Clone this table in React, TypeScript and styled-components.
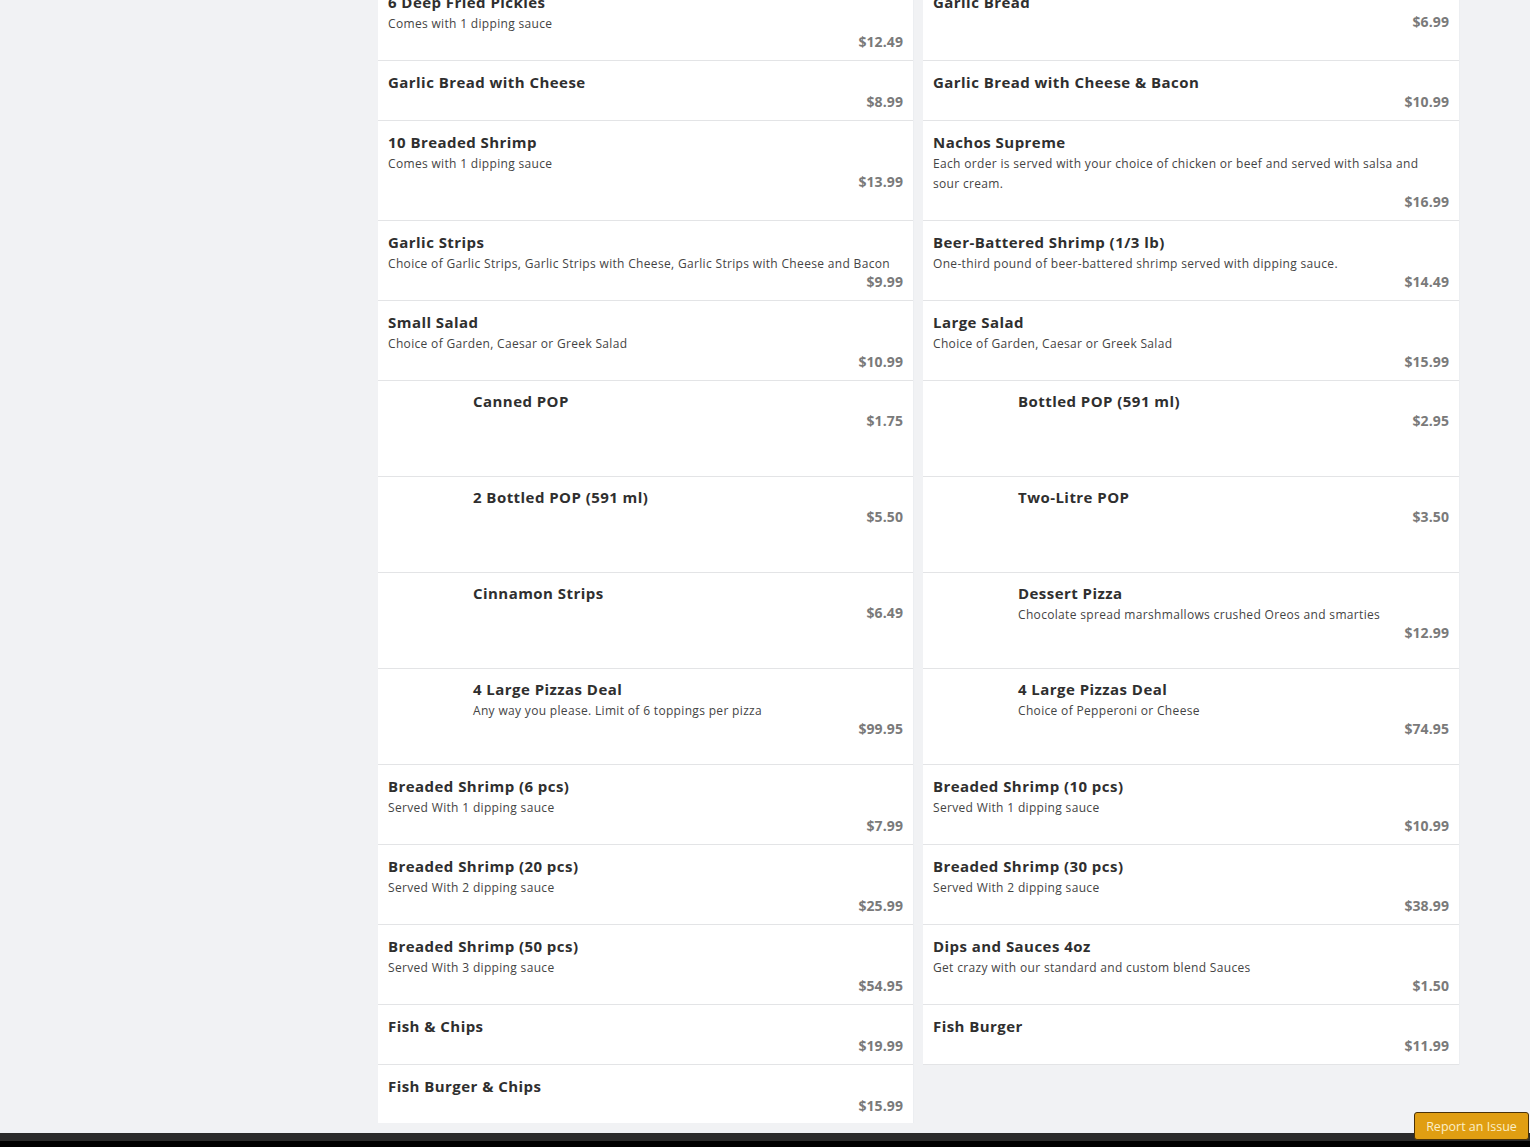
import styled, { createGlobalStyle } from "styled-components";

const GlobalStyle = createGlobalStyle`
  html, body {
    margin: 0;
    padding: 0;
    height: 100%;
    overflow: hidden;
    background: #f1f2f4;
    font-family: "Open Sans", "Liberation Sans", sans-serif;
  }
  #root {
    height: 100%;
  }
`;

type Item = {
  name: string;
  desc?: string;
  price: string;
  img?: boolean;
};

const rows: [Item, Item | null][] = [
  [
    { name: "6 Deep Fried Pickles", desc: "Comes with 1 dipping sauce", price: "$12.49" },
    { name: "Garlic Bread", price: "$6.99" },
  ],
  [
    { name: "Garlic Bread with Cheese", price: "$8.99" },
    { name: "Garlic Bread with Cheese & Bacon", price: "$10.99" },
  ],
  [
    { name: "10 Breaded Shrimp", desc: "Comes with 1 dipping sauce", price: "$13.99" },
    {
      name: "Nachos Supreme",
      desc: "Each order is served with your choice of chicken or beef and served with salsa and sour\u00a0cream.",
      price: "$16.99",
    },
  ],
  [
    {
      name: "Garlic Strips",
      desc: "Choice of Garlic Strips, Garlic Strips with Cheese, Garlic Strips with Cheese and Bacon",
      price: "$9.99",
    },
    {
      name: "Beer-Battered Shrimp (1/3 lb)",
      desc: "One-third pound of beer-battered shrimp served with dipping sauce.",
      price: "$14.49",
    },
  ],
  [
    { name: "Small Salad", desc: "Choice of Garden, Caesar or Greek Salad", price: "$10.99" },
    { name: "Large Salad", desc: "Choice of Garden, Caesar or Greek Salad", price: "$15.99" },
  ],
  [
    { name: "Canned POP", price: "$1.75", img: true },
    { name: "Bottled POP (591 ml)", price: "$2.95", img: true },
  ],
  [
    { name: "2 Bottled POP (591 ml)", price: "$5.50", img: true },
    { name: "Two-Litre POP", price: "$3.50", img: true },
  ],
  [
    { name: "Cinnamon Strips", price: "$6.49", img: true },
    {
      name: "Dessert Pizza",
      desc: "Chocolate spread marshmallows crushed Oreos and smarties",
      price: "$12.99",
      img: true,
    },
  ],
  [
    {
      name: "4 Large Pizzas Deal",
      desc: "Any way you please. Limit of 6 toppings per pizza",
      price: "$99.95",
      img: true,
    },
    { name: "4 Large Pizzas Deal", desc: "Choice of Pepperoni or Cheese", price: "$74.95", img: true },
  ],
  [
    { name: "Breaded Shrimp (6 pcs)", desc: "Served With 1 dipping sauce", price: "$7.99" },
    { name: "Breaded Shrimp (10 pcs)", desc: "Served With 1 dipping sauce", price: "$10.99" },
  ],
  [
    { name: "Breaded Shrimp (20 pcs)", desc: "Served With 2 dipping sauce", price: "$25.99" },
    { name: "Breaded Shrimp (30 pcs)", desc: "Served With 2 dipping sauce", price: "$38.99" },
  ],
  [
    { name: "Breaded Shrimp (50 pcs)", desc: "Served With 3 dipping sauce", price: "$54.95" },
    {
      name: "Dips and Sauces 4oz",
      desc: "Get crazy with our standard and custom blend Sauces",
      price: "$1.50",
    },
  ],
  [
    { name: "Fish & Chips", price: "$19.99" },
    { name: "Fish Burger", price: "$11.99" },
  ],
  [{ name: "Fish Burger & Chips", price: "$15.99" }, null],
];

const Page = styled.div`
  display: flex;
  flex-direction: column;
  height: 100%;
`;

const Main = styled.main`
  flex: 1;
  min-height: 0;
  overflow: hidden;
  display: grid;
  grid-template-columns: 378px 1081px;
  align-items: start;
`;

const Sidebar = styled.aside``;

const MenuGrid = styled.section`
  margin-top: -19px;
  display: grid;
  grid-template-columns: 535px 536px;
  column-gap: 10px;
`;

const Card = styled.div<{ $withImage?: boolean }>`
  display: flex;
  gap: 10px;
  padding: ${(p) => (p.$withImage ? "9px 10px 11px" : "10px 10px 9px")};
  background: #fff;
  border-bottom: 1px solid #e3e4e6;
  box-shadow: 1px 0 0 #eceef1;
`;

const Thumb = styled.div`
  flex: 0 0 75px;
  height: 75px;
  background: #fff;
`;

const Body = styled.div`
  flex: 1;
  min-width: 0;
  display: flex;
  flex-direction: column;
`;

const Title = styled.div`
  font-size: 15px;
  font-weight: 700;
  line-height: 22px;
  letter-spacing: 0.45px;
  color: #2f2f2f;
`;

const Desc = styled.div`
  padding-top: 1px;
  margin-bottom: -1px;
  font-size: 12px;
  line-height: 20px;
  letter-spacing: 0.33px;
  color: #444;
`;

const Price = styled.div`
  font-size: 14px;
  font-weight: 700;
  line-height: 18px;
  letter-spacing: 0.1px;
  color: #7a7a7a;
  text-align: right;
`;

const Footer = styled.footer`
  height: 6px;
  background: #000;
  border-top: 8px solid #2b2b2b;
  margin-top: 10px;
`;

const ReportButton = styled.button`
  position: fixed;
  right: 1px;
  bottom: 7px;
  width: 115px;
  height: 28px;
  padding: 0;
  border: 1px solid #4a3208;
  border-radius: 3px;
  background: #e09e12;
  color: #fbeec8;
  font-family: "Open Sans", "Liberation Sans", sans-serif;
  font-size: 12.5px;
  cursor: pointer;
`;

function MenuCard({ item }: { item: Item }) {
  return (
    <Card $withImage={item.img}>
      {item.img && <Thumb />}
      <Body>
        <Title>{item.name}</Title>
        {item.desc && <Desc>{item.desc}</Desc>}
        <Price>{item.price}</Price>
      </Body>
    </Card>
  );
}

export default function App() {
  return (
    <Page>
      <GlobalStyle />
      <Main>
        <Sidebar />
        <MenuGrid>
          {rows.map(([left, right], i) => [
            <MenuCard key={`l${i}`} item={left} />,
            right ? <MenuCard key={`r${i}`} item={right} /> : <div key={`r${i}`} />,
          ])}
        </MenuGrid>
      </Main>
      <Footer />
      <ReportButton>Report an Issue</ReportButton>
    </Page>
  );
}
